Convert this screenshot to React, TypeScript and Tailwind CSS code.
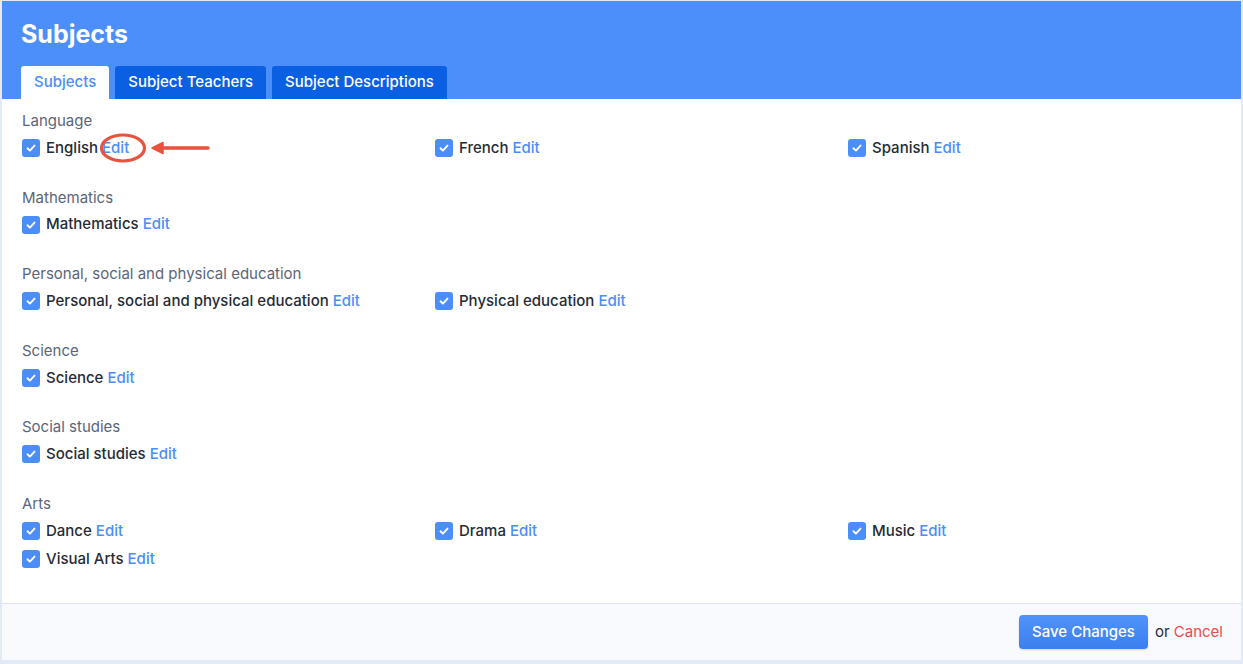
import React from "react";

type Subject = { name: string };
type Group = { title: string; subjects: Subject[] };

const groups: Group[] = [
  { title: "Language", subjects: [{ name: "English" }, { name: "French" }, { name: "Spanish" }] },
  { title: "Mathematics", subjects: [{ name: "Mathematics" }] },
  {
    title: "Personal, social and physical education",
    subjects: [{ name: "Personal, social and physical education" }, { name: "Physical education" }],
  },
  { title: "Science", subjects: [{ name: "Science" }] },
  { title: "Social studies", subjects: [{ name: "Social studies" }] },
  {
    title: "Arts",
    subjects: [{ name: "Dance" }, { name: "Drama" }, { name: "Music" }, { name: "Visual Arts" }],
  },
];

const tabs = ["Subjects", "Subject Teachers", "Subject Descriptions"];

const CheckBox = () => (
  <span className="flex h-[18px] w-[18px] shrink-0 items-center justify-center rounded-[3px] bg-[#4b8ef9]">
    <svg width="12" height="12" viewBox="0 0 12 12" fill="none">
      <path d="M2.5 6.3 4.9 8.6 9.5 3.6" stroke="white" strokeWidth="1.9" strokeLinecap="round" strokeLinejoin="round" />
    </svg>
  </span>
);

// red callout drawn around the first Edit link
const Callout = () => (
  <svg className="pointer-events-none absolute left-[74px] top-[-1px]" width="120" height="34" viewBox="0 0 120 34" fill="none">
    <ellipse cx="27" cy="15" rx="21.5" ry="13" stroke="#e9523f" strokeWidth="3.2" />
    <path d="M62 15 H112" stroke="#e9523f" strokeWidth="3.4" strokeLinecap="round" />
    <path d="M56 15 L67 9.5 L67 20.5 Z" fill="#e9523f" stroke="#e9523f" strokeWidth="1.5" strokeLinejoin="round" />
  </svg>
);

const SubjectRow = ({ subject, marked }: { subject: Subject; marked?: boolean }) => (
  <div className="relative flex h-[28px] items-center gap-[6px]">
    <CheckBox />
    <span className="text-[15px] text-[#262b36]">
      {subject.name} <span className="text-[#4b8ef9]">Edit</span>
    </span>
    {marked && <Callout />}
  </div>
);

export default function App() {
  return (
    <div
      className="min-h-[664px] bg-[#e2eaf7] pb-[4px] pl-[2px] pr-[2px] pt-[1px] font-medium antialiased"
      style={{ fontFamily: "Inter, 'Liberation Sans', sans-serif" }}
    >
      <div className="bg-white">
        <div className="bg-[#4d8ffa] px-[19px] pt-[18px]">
          <h1 className="text-[25px] font-bold leading-[30px] text-white">Subjects</h1>
          <div className="mt-[17px] flex gap-[6px]">
            {tabs.map((t, i) => (
              <div
                key={t}
                className={
                  i === 0
                    ? "flex h-[33px] items-center rounded-t-[3px] bg-white px-[13px] text-[15px] text-[#4b8ef9]"
                    : "flex h-[33px] items-center rounded-t-[3px] bg-[#0a5fe3] px-[13px] text-[15px] text-white"
                }
              >
                {t}
              </div>
            ))}
          </div>
        </div>

        <div className="flex flex-col gap-[25.6px] px-[20px] pb-[30px] pt-[12px]">
          {groups.map((g) => (
            <div key={g.title}>
              <div className="mb-[3px] text-[15px] font-normal leading-[20px] text-[#5b6579]">{g.title}</div>
              <div className="grid grid-cols-[413px_413px_1fr]">
                {g.subjects.map((s, i) => (
                  <SubjectRow key={s.name} subject={s} marked={g.title === "Language" && i === 0} />
                ))}
              </div>
            </div>
          ))}
        </div>

        <div className="flex h-[57px] items-center justify-end gap-[7px] border-t border-[#dfe6f1] bg-[#f8fafe] pr-[18px]">
          <button className="h-[34px] rounded-[4px] bg-gradient-to-b from-[#5093fa] to-[#3b7ff0] px-[13px] text-[15px] text-white shadow-[0_1px_2px_rgba(0,0,0,0.15)]">
            Save Changes
          </button>
          <span className="text-[15px] font-normal text-[#262b36]">
            or <span className="text-[#f04a4a]">Cancel</span>
          </span>
        </div>
      </div>
    </div>
  );
}
